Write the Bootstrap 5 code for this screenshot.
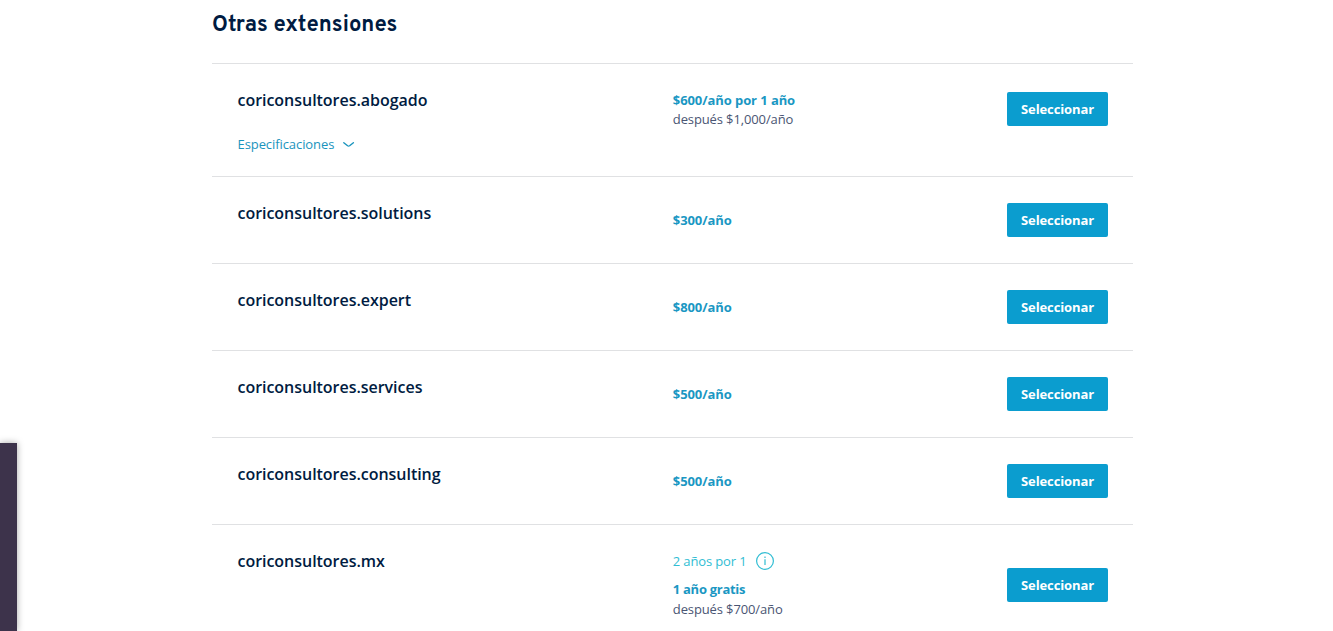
<!DOCTYPE html>
<html lang="es">
<head>
    <meta charset="UTF-8">
    <meta name="viewport" content="width=device-width, initial-scale=1.0">
    <title>Otras extensiones</title>
    <link href="https://cdn.jsdelivr.net/npm/bootstrap@5.3.0/dist/css/bootstrap.min.css" rel="stylesheet">
    <style>
        body {
            font-family: "Open Sans", sans-serif;
            font-size: 13px;
            line-height: 19px;
            color: #4a5573;
            background: #fff;
            height: 631px;
            overflow: hidden;
        }
        .extensiones {
            width: 921px;
            margin-left: 212px;
        }
        .titulo {
            font-family: Overpass, Inter, sans-serif;
            font-size: 22px;
            font-weight: 700;
            line-height: 30px;
            letter-spacing: .05px;
            height: 63px;
            padding-top: 11px;
            color: #001b41;
        }
        .dominio {
            height: 87px;
            padding: 0 25px 0 25.5px;
            border-top: 1px solid #e0e1e3;
        }
        .dominio-alto { height: 113px; }
        .dominio-mx { height: 120px; }
        .nombre {
            width: 435.3px;
            padding-top: 24px;
            font-size: 16px;
            font-weight: 600;
            line-height: 24px;
            letter-spacing: -.03px;
            color: #001b41;
        }
        .especificaciones {
            font-size: 13px;
            font-weight: 400;
            line-height: 20px;
            letter-spacing: -.08px;
            margin-top: 22px;
            color: #1a94bd;
            text-decoration: none;
        }
        .precios { padding-top: 27px; }
        .precios-promo { padding-top: 26px; }
        .detalle { letter-spacing: -.12px; }
        .precio {
            color: #1a97c3;
            font-weight: 700;
            letter-spacing: -.08px;
        }
        .gratis {
            margin-bottom: 1px;
            line-height: 20px;
            letter-spacing: -.28px;
        }
        .promo {
            height: 20px;
            color: #30bdd3;
            letter-spacing: -.13px;
        }
        .btn-elegir {
            --bs-btn-color: #fff;
            --bs-btn-bg: #0b9dcf;
            --bs-btn-hover-color: #fff;
            --bs-btn-hover-bg: #0986b1;
            width: 101px;
            height: 34px;
            padding: 2px 0 0;
            border: 0;
            border-radius: 2px;
            font-size: 13px;
            font-weight: 700;
            letter-spacing: -.12px;
        }
        .panel-lateral {
            position: fixed;
            left: 0;
            top: 443px;
            bottom: 0;
            width: 17px;
            background: #3d334b;
            box-shadow: 0 0 7px rgba(0, 0, 0, .35);
        }
    </style>
</head>
<body>
    <main class="extensiones">
        <h2 class="titulo m-0">Otras extensiones</h2>

        <div class="dominio dominio-alto d-flex">
            <div class="nombre">
                <div>coriconsultores.abogado</div>
                <a class="especificaciones d-flex align-items-center" href="#">Especificaciones
                    <svg class="ms-2" width="13" height="8" viewBox="0 0 13 8" fill="none" stroke="currentColor" stroke-width="1.4" stroke-linecap="round" stroke-linejoin="round"><path d="M1.8 2.7L5.6 5.8Q6.6 6.5 7.6 5.8L11.4 2.7"/></svg>
                </a>
            </div>
            <div class="precios flex-grow-1">
                <div class="precio">$600/año por 1 año</div>
                <div class="detalle">después $1,000/año</div>
            </div>
            <div class="pt-4"><button type="button" class="btn btn-elegir mt-1">Seleccionar</button></div>
        </div>

        <div class="dominio d-flex">
            <div class="nombre">coriconsultores.solutions</div>
            <div class="precio flex-grow-1 align-self-center">$300/año</div>
            <button type="button" class="btn btn-elegir align-self-center">Seleccionar</button>
        </div>
        <div class="dominio d-flex">
            <div class="nombre">coriconsultores.expert</div>
            <div class="precio flex-grow-1 align-self-center">$800/año</div>
            <button type="button" class="btn btn-elegir align-self-center">Seleccionar</button>
        </div>
        <div class="dominio d-flex">
            <div class="nombre">coriconsultores.services</div>
            <div class="precio flex-grow-1 align-self-center">$500/año</div>
            <button type="button" class="btn btn-elegir align-self-center">Seleccionar</button>
        </div>
        <div class="dominio d-flex">
            <div class="nombre">coriconsultores.consulting</div>
            <div class="precio flex-grow-1 align-self-center">$500/año</div>
            <button type="button" class="btn btn-elegir align-self-center">Seleccionar</button>
        </div>

        <div class="dominio dominio-mx d-flex">
            <div class="nombre">coriconsultores.mx</div>
            <div class="precios-promo flex-grow-1">
                <div class="promo d-flex align-items-center mb-2">2 años por 1
                    <svg class="ms-2" width="20" height="20" viewBox="0 0 20 20" fill="none" stroke="currentColor" stroke-width="1.2"><circle cx="10" cy="10" r="8.4"/><path d="M10 8.2V14M10 5.6V7"/></svg>
                </div>
                <div class="precio gratis">1 año gratis</div>
                <div class="detalle">después $700/año</div>
            </div>
            <button type="button" class="btn btn-elegir align-self-center">Seleccionar</button>
        </div>
    </main>

    <div class="panel-lateral"></div>
    <script src="https://cdn.jsdelivr.net/npm/bootstrap@5.3.0/dist/js/bootstrap.bundle.min.js"></script>
</body>
</html>
